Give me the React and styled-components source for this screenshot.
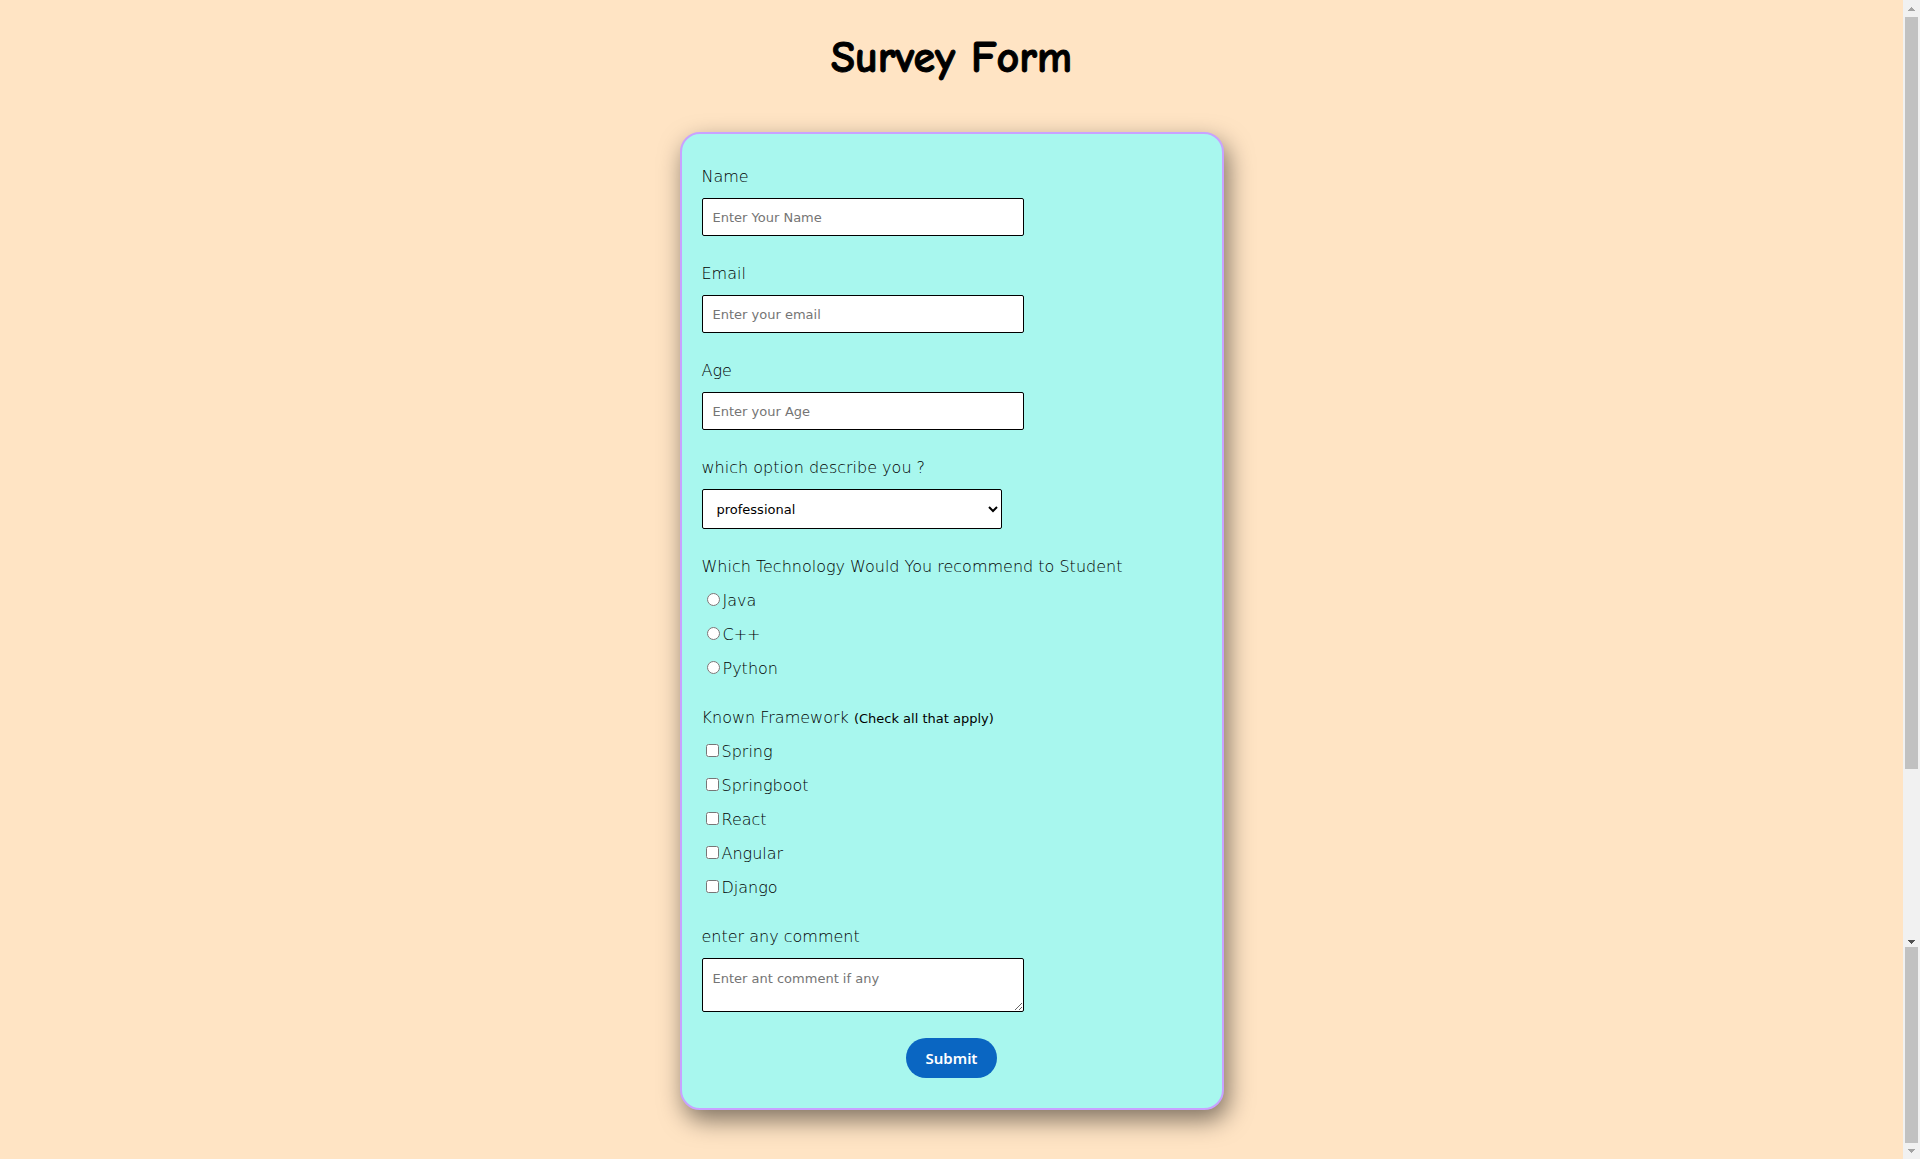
import React from "react";
import styled, { createGlobalStyle } from "styled-components";

const GlobalStyle = createGlobalStyle`
  * { box-sizing: border-box; }
  body { margin: 0; background: #ffe4c4; }
`;

const bodyFont = `"DejaVu Sans Light", "DejaVu Sans", Verdana, sans-serif`;
const controlFont = `"DejaVu Sans", Verdana, sans-serif`;

const Page = styled.div`
  display: flex;
  min-height: 100vh;
  color: #000;
  font: 200 16px/24px ${bodyFont};
`;

const Main = styled.main`
  flex: 1;
  display: flex;
  flex-direction: column;
  align-items: center;
  padding: 28px 20px 48px;
`;

const Title = styled.h1`
  margin: 0 0 44px;
  font: 700 44px/60px "Comic Sans MS", "Comic Neue", Lato, sans-serif;
  -webkit-text-stroke: 1px #000;
`;

const Card = styled.form`
  width: 100%;
  max-width: 544px;
  display: flex;
  flex-direction: column;
  gap: 26px;
  padding: 31px 20px 30px;
  border: 2px solid #c8a2ff;
  border-radius: 20px;
  background: #a8f7ee;
  box-shadow: 4px 10px 25px rgba(0, 0, 0, 0.5);
`;

const Field = styled.div`
  display: flex;
  flex-direction: column;
  align-items: flex-start;
  gap: 9px;
`;

const Group = styled.fieldset`
  display: flex;
  flex-direction: column;
  gap: 10px;
  min-width: 0;
  margin: 0;
  padding: 0;
  border: 0;
`;

const Legend = styled.legend`
  padding: 0 0 9px;
`;

const Hint = styled.small`
  font: 400 13px/16px ${controlFont};
`;

const Input = styled.input`
  width: 322px;
  max-width: 100%;
  height: 38px;
  padding: 10px;
  border: 1px solid #000;
  border-radius: 2px;
  background: #fff;
  font: 400 13px/16px ${controlFont};
  &::placeholder { color: #757575; }
`;

const TextArea = styled(Input).attrs({ as: "textarea" })`
  height: 54px;
  display: block;
  padding-top: 12px;
`;

const Select = styled.select`
  width: 300px;
  max-width: 100%;
  height: 40px;
  padding: 10px;
  border: 1px solid #000;
  border-radius: 2px;
  background: #fff;
  color: #000;
  font: 400 13px/16px ${controlFont};
`;

const Option = styled.label`
  display: flex;
  align-items: center;
  padding-top: 2px;
  line-height: 22px;
  input {
    width: 13px;
    height: 13px;
    margin: 0 3px 3px ${(p) => (p.$radio ? 5 : 4)}px;
  }
`;

const Submit = styled.button`
  align-self: center;
  height: 40px;
  padding: 0 20px;
  border: 0;
  border-radius: 20px;
  background: #0a66c2;
  color: #fff;
  font: 600 15px/20px "Noto Sans", "Open Sans", sans-serif;
`;

const Scrollbar = styled.div`
  width: 17px;
  display: flex;
  flex-direction: column;
  background: #f1f1f1;
`;

const Thumb = styled.div`
  flex: ${(p) => p.$size} 0 0;
  margin: 0 2px;
  background: #c1c1c1;
`;

const Track = styled.div`
  flex: 165 0 0;
`;

const ArrowBox = styled.svg`
  display: block;
  flex: none;
`;

const Arrow = ({ up, color, height = 17 }) => (
  <ArrowBox
    width="17"
    height={height}
    viewBox={`0 0 17 ${height}`}
    aria-hidden="true"
    shapeRendering="crispEdges"
  >
    <path d={up ? "M5 11h7L8.5 7z" : "M5 6h7L8.5 10z"} fill={color} />
  </ArrowBox>
);

const fields = [
  { id: "name", label: "Name", type: "text", placeholder: "Enter Your Name" },
  { id: "email", label: "Email", type: "email", placeholder: "Enter your email" },
  { id: "age", label: "Age", type: "text", placeholder: "Enter your Age" },
];
const technologies = ["Java", "C++", "Python"];
const frameworks = ["Spring", "Springboot", "React", "Angular", "Django"];

export default function App() {
  return (
    <Page>
      <GlobalStyle />
      <Main>
        <Title>Survey Form</Title>
        <Card onSubmit={(e) => e.preventDefault()}>
          {fields.map((f) => (
            <Field key={f.id}>
              <label htmlFor={f.id}>{f.label}</label>
              <Input id={f.id} type={f.type} placeholder={f.placeholder} />
            </Field>
          ))}
          <Field>
            <label htmlFor="role">which option describe you ?</label>
            <Select id="role" defaultValue="professional">
              <option value="professional">professional</option>
              <option value="student">student</option>
            </Select>
          </Field>
          <Group>
            <Legend>Which Technology Would You recommend to Student</Legend>
            {technologies.map((t) => (
              <Option key={t} $radio>
                <input type="radio" name="technology" value={t} />
                {t}
              </Option>
            ))}
          </Group>
          <Group>
            <Legend>
              Known Framework <Hint>(Check all that apply)</Hint>
            </Legend>
            {frameworks.map((f) => (
              <Option key={f}>
                <input type="checkbox" name="framework" value={f} />
                {f}
              </Option>
            ))}
          </Group>
          <Field>
            <label htmlFor="comment">enter any comment</label>
            <TextArea id="comment" placeholder="Enter ant comment if any" />
          </Field>
          <Submit type="submit">Submit</Submit>
        </Card>
      </Main>
      <Scrollbar aria-hidden="true">
        <Arrow up color="#a3a3a3" />
        <Thumb $size={752} />
        <Track />
        <Arrow color="#505050" height={13} />
        <Thumb $size={196} />
        <Arrow color="#a3a3a3" height={16} />
      </Scrollbar>
    </Page>
  );
}
